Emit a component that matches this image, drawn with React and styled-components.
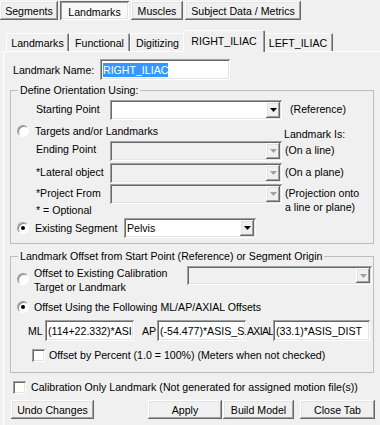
import React from "react";
import styled, { createGlobalStyle, css } from "styled-components";

const Global = createGlobalStyle`
  html, body { margin: 0; padding: 0; background: #f0f0f0; }
  body { font-family: "Liberation Sans", Arial, sans-serif; font-size: 10.6px; color: #000; }
  * { box-sizing: border-box; }
`;

const raised = css`
  background: #f0f0f0;
  box-shadow: inset -1px -1px #696969, inset 1px 1px #fff, inset -2px -2px #a0a0a0, inset 2px 2px #e3e3e3;
`;
const pressed = css`
  background: #f9f9f9;
  box-shadow: inset 1px 1px #696969, inset -1px -1px #fff, inset 2px 2px #a0a0a0, inset -2px -2px #e3e3e3;
`;
const sunken = css`
  box-shadow: inset 1px 1px #a0a0a0, inset -1px -1px #fff, inset 2px 2px #696969, inset -2px -2px #e3e3e3;
`;

const Page = styled.div`
  width: 380px;
  height: 425px;
  overflow: hidden;
  background: #f0f0f0;
`;

const TopBar = styled.div`
  display: flex;
  gap: 2px;
  padding-top: 1px;
  height: 21px;
`;

const TopButton = styled.div`
  width: ${(p) => p.$w}px;
  height: 19px;
  display: flex;
  align-items: center;
  justify-content: center;
  padding-top: ${(p) => (p.$active ? 2 : 0)}px;
  ${(p) => (p.$active ? pressed : raised)}
`;

const TabStrip = styled.div`
  display: flex;
  align-items: flex-end;
  height: 21px;
  margin-top: 9px;
  padding-left: 6px;
  position: relative;
  z-index: 1;
`;

const Tab = styled.div`
  width: ${(p) => p.$w}px;
  height: ${(p) => (p.$active ? 22 : 18)}px;
  margin: 0 ${(p) => (p.$active ? -2 : 0)}px ${(p) => (p.$active ? -1 : 0)}px;
  position: relative;
  z-index: ${(p) => (p.$active ? 2 : 1)};
  display: flex;
  align-items: center;
  justify-content: center;
  padding-top: ${(p) => (p.$active ? 0 : 2)}px;
  background: #f0f0f0;
  border-radius: 2px 2px 0 0;
  box-shadow: inset 1px 1px #fff, inset -1px 0 #696969, inset -2px 0 #a0a0a0;
`;

const Panel = styled.div`
  margin-left: 3px;
  width: 420px;
  height: 400px;
  border-top: 1px solid #fff;
  border-left: 1px solid #fff;
  padding-left: 6px;
  display: flex;
  flex-direction: column;
`;

const NameRow = styled.div`
  display: flex;
  align-items: center;
  height: 21px;
  margin-top: 7px;
  padding-left: 3px;
`;

const FixedLabel = styled.span`
  width: ${(p) => p.$w}px;
  flex: none;
  white-space: nowrap;
  padding-left: ${(p) => p.$pl || 0}px;
  letter-spacing: ${(p) => p.$ls || 0}px;
`;

const TextField = styled.div`
  width: ${(p) => p.$w}px;
  height: ${(p) => p.$h || 21}px;
  flex: none;
  background: #fff;
  ${sunken}
  display: flex;
  align-items: center;
  padding-left: 3px;
  white-space: nowrap;
  overflow: hidden;
`;

const Selected = styled.span`
  background: #3399ff;
  color: #fff;
  line-height: 14px;
`;

const Group = styled.fieldset`
  margin: ${(p) => p.$mt}px 0 0 0;
  width: 364px;
  padding: 3px 4px ${(p) => p.$pb}px 6px;
  border: 1px solid #bdbdbd;
  min-width: 0;
`;

const Legend = styled.legend`
  margin-left: 1px;
  padding: 0 2px;
  line-height: 14px;
  font-size: 10.6px;
`;

const OrientGrid = styled.div`
  display: grid;
  grid-template-columns: 19px 74px 172px 1fr;
  grid-template-rows: 20px 21px 22px 21px 20px 14px 20px;
`;

const GridLabel = styled.span`
  grid-column: 2;
  line-height: ${(p) => p.$lh || 19}px;
  white-space: nowrap;
`;

const Note = styled.span`
  grid-column: 4;
  margin-left: ${(p) => p.$ml || 3}px;
  margin-top: ${(p) => p.$mt || 0}px;
  align-self: ${(p) => p.$align || "start"};
  line-height: ${(p) => p.$lh || 19}px;
  white-space: nowrap;
`;

const ComboBox = styled.div`
  width: ${(p) => p.$w}px;
  height: ${(p) => p.$h || 20}px;
  flex: none;
  align-self: start;
  background: ${(p) => (p.$disabled ? "#f0f0f0" : "#fff")};
  ${sunken}
  display: flex;
  align-items: center;
  justify-content: space-between;
  padding: 2px 2px 2px 3px;
`;

const DropBtn = styled.span`
  width: 14px;
  height: 100%;
  flex: none;
  ${raised}
  display: flex;
  align-items: center;
  justify-content: center;
`;

const Arrow = ({ disabled }) => (
  <svg width="7" height="4" viewBox="0 0 7 4">
    <polygon points="0,0 7,0 3.5,4" fill={disabled ? "#a0a0a0" : "#000"} />
  </svg>
);

const Combo = ({ w, h, disabled, children }) => (
  <ComboBox $w={w} $h={h} $disabled={disabled}>
    <span>{children}</span>
    <DropBtn>
      <Arrow disabled={disabled} />
    </DropBtn>
  </ComboBox>
);

const RadioLine = styled.div`
  grid-column: ${(p) => p.$span || "auto"};
  display: flex;
  align-items: ${(p) => p.$items || "center"};
  gap: ${(p) => p.$gap ?? 6}px;
  height: ${(p) => p.$h}px;
  margin-top: ${(p) => p.$mt || 0}px;
  padding-left: ${(p) => p.$pl || 0}px;
  white-space: nowrap;
`;

const RadioDot = styled.span`
  width: 12px;
  height: 12px;
  flex: none;
  border-radius: 50%;
  background: #fff;
  border: 1px solid;
  border-color: #a0a0a0 #fff #fff #a0a0a0;
  box-shadow: inset 1px 1px 0 #8c8c8c;
  position: relative;
  margin-top: ${(p) => p.$mt || 0}px;
  &::after {
    content: "";
    display: ${(p) => (p.$checked ? "block" : "none")};
    position: absolute;
    left: 3px;
    top: 3px;
    width: 4px;
    height: 4px;
    border-radius: 50%;
    background: #000;
  }
`;

const CheckBox = styled.span`
  width: 13px;
  height: 13px;
  flex: none;
  background: #fff;
  ${sunken}
`;

const TwoLine = styled.span`
  width: ${(p) => p.$w}px;
  flex: none;
  line-height: 14px;
  white-space: nowrap;
`;

const OffsetRow = styled.div`
  display: flex;
  align-items: center;
  height: 21px;
  margin-top: 3px;
  padding-left: 11px;
`;

const BottomBar = styled.div`
  display: flex;
  align-items: center;
  width: 365px;
  height: 19px;
  margin-top: 3px;
  padding-left: 1px;
`;

const Button = styled.div`
  width: ${(p) => p.$w}px;
  height: 19px;
  margin-left: ${(p) => p.$ml || 0}px;
  flex: none;
  display: flex;
  align-items: center;
  justify-content: center;
  ${raised}
`;

export default function App() {
  return (
    <Page>
      <Global />
      <TopBar>
        <TopButton $w={58}>Segments</TopButton>
        <TopButton $w={69} $active>Landmarks</TopButton>
        <TopButton $w={52}>Muscles</TopButton>
        <TopButton $w={116}>Subject Data / Metrics</TopButton>
      </TopBar>

      <TabStrip>
        <Tab $w={63}>Landmarks</Tab>
        <Tab $w={61}>Functional</Tab>
        <Tab $w={55}>Digitizing</Tab>
        <Tab $w={82} $active>RIGHT_ILIAC</Tab>
        <Tab $w={70}>LEFT_ILIAC</Tab>
      </TabStrip>

      <Panel>
        <NameRow>
          <FixedLabel $w={87}>Landmark Name:</FixedLabel>
          <TextField $w={130}>
            <Selected>RIGHT_ILIAC</Selected>
          </TextField>
        </NameRow>

        <Group $mt={3} $pb={5}>
          <Legend>Define Orientation Using:</Legend>
          <OrientGrid>
            <GridLabel>Starting Point</GridLabel>
            <Combo w={172} />
            <Note $ml={8}>(Reference)</Note>

            <RadioLine $span="1 / 4" $h={21}>
              <RadioDot />
              <span>Targets and/or Landmarks</span>
            </RadioLine>
            <Note $ml={2} $align="end" $lh={14} $mt={-2}>Landmark Is:</Note>

            <GridLabel $lh={16}>Ending Point</GridLabel>
            <Combo w={172} disabled />
            <Note>(On a line)</Note>

            <GridLabel>*Lateral object</GridLabel>
            <Combo w={172} disabled />
            <Note>(On a plane)</Note>

            <GridLabel>*Project From</GridLabel>
            <Combo w={172} disabled />
            <Note $lh={14} $mt={2}>
              (Projection onto
              <br />a line or plane)
            </Note>

            <GridLabel $lh={12}>* = Optional</GridLabel>

            <RadioLine $span="1 / -1" $h={20} $gap={0}>
              <RadioDot $checked />
              <FixedLabel $w={95} $pl={6}>Existing Segment</FixedLabel>
              <Combo w={132}>Pelvis</Combo>
            </RadioLine>
          </OrientGrid>
        </Group>

        <Group $mt={5} $pb={7}>
          <Legend>Landmark Offset from Start Point (Reference) or Segment Origin</Legend>
          <RadioLine $h={28} $gap={0} $items="flex-start">
            <RadioDot $mt={7} />
            <TwoLine $w={158} style={{ paddingLeft: 5 }}>
              Offset to Existing Calibration
              <br />
              Target or Landmark
            </TwoLine>
            <Combo w={185} h={19} disabled />
          </RadioLine>
          <RadioLine $h={20} $mt={3} $gap={5}>
            <RadioDot $checked />
            <span>Offset Using the Following ML/AP/AXIAL Offsets</span>
          </RadioLine>
          <OffsetRow>
            <FixedLabel $w={17}>ML</FixedLabel>
            <TextField $w={89}>(114+22.332)*ASI</TextField>
            <FixedLabel $w={23} $pl={8}>AP</FixedLabel>
            <TextField $w={89}>(-54.477)*ASIS_S.</TextField>
            <FixedLabel $w={27} $pl={1} $ls={-0.7}>AXIAL</FixedLabel>
            <TextField $w={97}>(33.1)*ASIS_DIST</TextField>
          </OffsetRow>
          <RadioLine $h={20} $mt={4} $gap={4} $pl={15}>
            <CheckBox />
            <span>Offset by Percent (1.0 = 100%) (Meters when not checked)</span>
          </RadioLine>
        </Group>

        <RadioLine $h={20} $mt={4} $gap={5} $pl={3}>
          <CheckBox />
          <span>Calibration Only Landmark (Not generated for assigned motion file(s))</span>
        </RadioLine>

        <BottomBar>
          <Button $w={83}>Undo Changes</Button>
          <Button $w={74} $ml={54}>Apply</Button>
          <Button $w={71} $ml={1}>Build Model</Button>
          <Button $w={75} $ml={6}>Close Tab</Button>
        </BottomBar>
      </Panel>
    </Page>
  );
}
